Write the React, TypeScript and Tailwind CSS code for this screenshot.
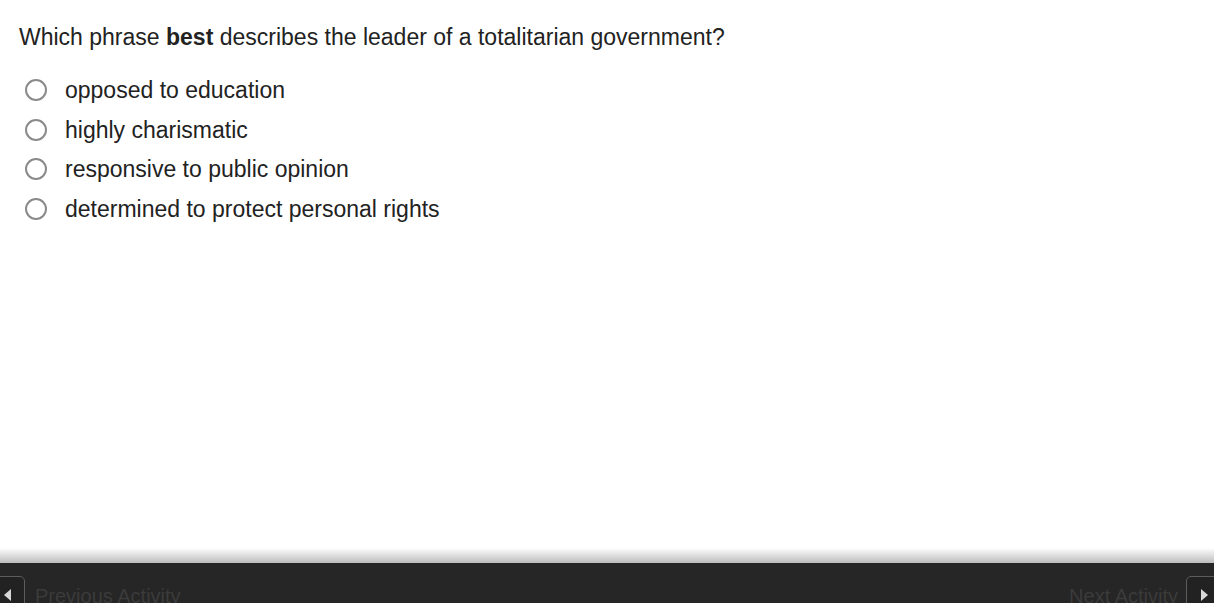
import React from "react";

const options = [
  "opposed to education",
  "highly charismatic",
  "responsive to public opinion",
  "determined to protect personal rights",
];

function Radio() {
  return (
    <span className="block w-[22px] h-[22px] rounded-full border-2 border-[#8a8a8a] bg-white shrink-0" />
  );
}

export default function App() {
  return (
    <div
      className="h-[603px] w-full flex flex-col bg-white overflow-hidden text-[#222]"
      style={{ fontFamily: '"Liberation Sans", Arial, sans-serif' }}
    >
      <main className="flex-1 pl-[19px] pt-[24px]">
        <p className="text-[23px] leading-[26px]">
          Which phrase <b className="font-bold">best</b> describes the leader of a totalitarian government?
        </p>
        <ul className="mt-[27px] flex flex-col gap-[13.5px]">
          {options.map((o) => (
            <li key={o} className="flex items-center h-[26px]">
              <span className="ml-[6px] mr-[18px]">
                <Radio />
              </span>
              <span className="text-[23px] leading-[26px]">{o}</span>
            </li>
          ))}
        </ul>
      </main>

      <div className="h-[15px] bg-gradient-to-b from-white to-[#bdbdbd]" />
      <footer className="h-[40px] bg-[#262626] flex justify-between items-start pt-[13px]">
        <div className="flex items-start">
          <button className="ml-[-6px] w-[31px] h-[40px] rounded-[5px] border border-[#5c5c5c] bg-[#222] flex items-start justify-end pr-[13px] pt-[12px]">
            <svg width="7" height="12" viewBox="0 0 7 12">
              <polygon points="7,0 7,12 0,6" fill="#d8d8d8" />
            </svg>
          </button>
          <span className="ml-[10px] mt-[9px] text-[20px] leading-[23px] text-[#3b3b3b]">
            Previous Activity
          </span>
        </div>
        <div className="flex items-start">
          <span className="mr-[8px] mt-[9px] text-[20px] leading-[23px] text-[#3b3b3b]">
            Next Activity
          </span>
          <button className="mr-[-6px] w-[34px] h-[40px] rounded-[5px] border border-[#5c5c5c] bg-[#222] flex items-start justify-start pl-[14px] pt-[12px]">
            <svg width="7" height="12" viewBox="0 0 7 12">
              <polygon points="0,0 0,12 7,6" fill="#d8d8d8" />
            </svg>
          </button>
        </div>
      </footer>
    </div>
  );
}
